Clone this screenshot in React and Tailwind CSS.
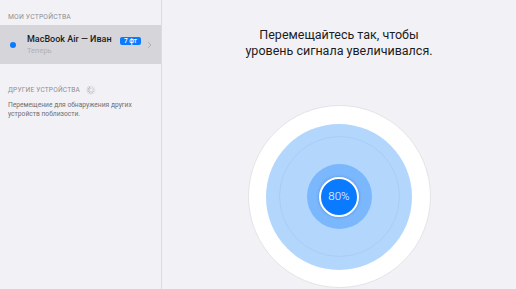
import React from 'react';

const font = { fontFamily: 'Roboto, "Liberation Sans", "Noto Sans", sans-serif' };

const Spinner = () => (
  <svg width="10" height="10" viewBox="0 0 20 20" className="ml-[6px]">
    {Array.from({ length: 12 }).map((_, i) => (
      <line
        key={i}
        x1="10"
        y1="2"
        x2="10"
        y2="6"
        stroke="#9a9aa0"
        strokeWidth="1.6"
        strokeLinecap="round"
        opacity={0.25 + (i / 12) * 0.6}
        transform={`rotate(${i * 30} 10 10)`}
      />
    ))}
  </svg>
);

const Sidebar = () => (
  <div className="w-[162px] shrink-0 h-full bg-[#f2f2f6] border-r border-[#dcdce0] flex flex-col">
    <div className="px-2 pt-[13px] pb-[4px] text-[6.8px] leading-[8px] text-[#8e8e93] tracking-wide">МОИ УСТРОЙСТВА</div>
    <div className="h-[39px] bg-[#d6d6da] flex items-center pl-[10px] pr-[9px]">
      <span className="w-[6px] h-[6px] rounded-full bg-[#0a7aff] shrink-0" />
      <div className="ml-[11px] flex-1 leading-none whitespace-nowrap">
        <div className="text-[9px] font-medium text-[#1c1c1e]">MacBook Air — Иван</div>
        <div className="text-[7.5px] text-[#b0b0b5] mt-[3px]">Теперь</div>
      </div>
      <span className="mt-[-8px] bg-[#0a7aff] text-white text-[6.5px] font-medium rounded-[2px] px-[4px] py-[1px] leading-[6px] whitespace-nowrap">7 фт</span>
      <svg width="5" height="8" viewBox="0 0 5 8" className="ml-[6px]">
        <path d="M1 1l3 3-3 3" stroke="#b0b0b5" strokeWidth="1" fill="none" />
      </svg>
    </div>
    <div className="px-2 pt-[21px] flex items-center text-[6.6px] leading-[8px] text-[#8e8e93] tracking-wide">
      ДРУГИЕ УСТРОЙСТВА
      <Spinner />
    </div>
    <div className="px-2 pt-[6px] text-[6.7px] leading-[9px] text-[#6e6e73]">
      Перемещение для обнаружения других устройств поблизости.
    </div>
  </div>
);

const Radar = () => (
  <div className="w-[183px] h-[183px] rounded-full bg-white border border-[#e4e4e8] flex items-center justify-center">
    <div className="w-[146px] h-[146px] rounded-full bg-[#b3d6fd] flex items-center justify-center">
      <div className="w-[121px] h-[121px] rounded-full border border-[#a9cdf6] flex items-center justify-center">
        <div className="w-[65px] h-[65px] rounded-full bg-[#7ab7fc] flex items-center justify-center">
          <div className="w-[40px] h-[40px] rounded-full bg-[#0a7aff] border-2 border-white flex items-center justify-center shadow-[0_0_3px_rgba(0,60,160,0.35)]">
            <span className="text-white text-[11.5px] font-light">80%</span>
          </div>
        </div>
      </div>
    </div>
  </div>
);

export default function App() {
  return (
    <div className="w-[516px] h-[289px] flex overflow-hidden bg-[#f2f2f6]" style={font}>
      <Sidebar />
      <div className="flex-1 flex flex-col items-center pt-[27px]">
        <div className="text-[12.5px] leading-[16px] text-[#1c1c1e] text-center whitespace-nowrap">
          Перемещайтесь так, чтобы
          <br />
          уровень сигнала увеличивался.
        </div>
        <div className="mt-[46px]">
          <Radar />
        </div>
      </div>
    </div>
  );
}
